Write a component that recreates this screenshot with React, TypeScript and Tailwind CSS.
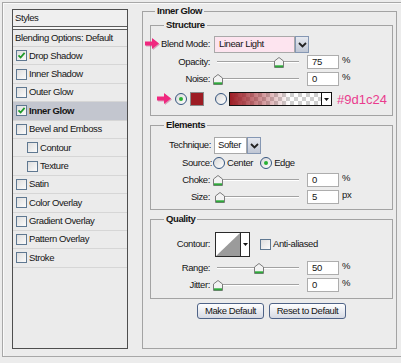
import React from "react";

const styleRows: { label: string; checked?: boolean; nested?: boolean; selected?: boolean }[] = [
  { label: "Drop Shadow", checked: true },
  { label: "Inner Shadow" },
  { label: "Outer Glow" },
  { label: "Inner Glow", checked: true, selected: true },
  { label: "Bevel and Emboss" },
  { label: "Contour", nested: true },
  { label: "Texture", nested: true },
  { label: "Satin" },
  { label: "Color Overlay" },
  { label: "Gradient Overlay" },
  { label: "Pattern Overlay" },
  { label: "Stroke" },
];

function CheckBox({ checked }: { checked?: boolean }) {
  return (
    <span className="w-[11px] h-[11px] border border-[#5f7891] bg-gradient-to-br from-[#dedede] to-[#fbfbfb] flex items-center justify-center shrink-0">
      {checked && (
        <svg width="9" height="9" viewBox="0 0 9 9">
          <path d="M1.5 4.3 L3.6 6.5 L7.6 1.8" stroke="#1f9a2a" strokeWidth="1.8" fill="none" />
        </svg>
      )}
    </span>
  );
}

function Radio({ on }: { on?: boolean }) {
  return (
    <span className="w-[12px] h-[12px] rounded-full border border-[#35557f] bg-gradient-to-br from-[#d8d8d8] to-white flex items-center justify-center shrink-0">
      {on && <span className="w-[4px] h-[4px] rounded-full bg-[#27b033]" />}
    </span>
  );
}

function PinkArrow() {
  return (
    <svg width="16" height="12" viewBox="0 0 16 12" className="shrink-0">
      <path d="M1 4.5 H8 V1 L15 6.5 L8 12 V8.5 H1 Z" fill="#b01a5c" opacity="0.35" />
      <path d="M0 3.5 H7 V0 L14 5.5 L7 11 V7.5 H0 Z" fill="#f0287f" />
    </svg>
  );
}

function Chevron() {
  return (
    <span className="w-[14px] h-full border border-[#8597b3] bg-gradient-to-b from-[#e6e9f0] to-[#bfc6d4] flex items-center justify-center shrink-0">
      <svg width="9" height="6" viewBox="0 0 9 6">
        <path d="M1 1 L4.5 4.5 L8 1" stroke="#222" strokeWidth="1.8" fill="none" />
      </svg>
    </span>
  );
}

function Slider({ value }: { value: number }) {
  // track 217..298, thumb centre at 218 for 0
  return (
    <div className="relative ml-[4px] w-[85px] h-full shrink-0">
      <div className="absolute left-[3px] right-0 top-[6px] h-[1px] bg-[#a2a2a2]" />
      <div className="absolute left-[3px] right-0 top-[7px] h-[1px] bg-white" />
      <svg
        className="absolute top-[2px]"
        style={{ left: Math.round(4 + value * 0.81) - 5 }}
        width="10"
        height="11"
        viewBox="0 0 10 11"
      >
        <path d="M0.5 4 L5 0.5 L9.5 4 V10.5 H0.5 Z" fill="#f3f3f3" stroke="#7b7b7b" />
        <path d="M1 9.3 H9" stroke="#2ea83a" strokeWidth="2" />
      </svg>
    </div>
  );
}

function NumBox({ value }: { value: string }) {
  return (
    <span className="ml-[8px] w-[32px] h-[14px] border border-[#adadad] bg-white pl-[4px] leading-[12px] shrink-0">
      {value}
    </span>
  );
}

function SliderRow({ label, value, pos, unit, top }: { label: string; value: string; pos: number; unit: string; top: string }) {
  return (
    <div className={`flex items-center h-[14px] ${top}`}>
      <span className="w-[59px] text-right shrink-0">{label}</span>
      <Slider value={pos} />
      <NumBox value={value} />
      <span className="ml-[3px] -mt-[3px]">{unit}</span>
    </div>
  );
}

export default function App() {
  return (
    <div className="w-[401px] h-[363px] bg-[#ececec] overflow-hidden font-['Liberation_Sans',Arial,sans-serif] text-[9.5px] tracking-[-0.4px] text-[#151515]">
      <div className="mt-[2px] ml-[2px] h-[355px] border-t border-l border-b border-[#a8a8a8] shadow-[inset_1px_1px_0_#fafafa] flex">
        {/* Styles list */}
        <div className="ml-[9px] mt-[6px] w-[116px] h-[340px] border border-[#4e4e4e] bg-[#ebebeb] flex flex-col">
          <div className="h-[16px] flex items-center pl-[2px] bg-[#efefef]">Styles</div>
          <div className="h-[4px] border-y border-[#5c5c5c] bg-[#f7f7f7]" />
          <div className="h-[17px] flex items-center pl-[2px] border-b border-[#d2d2d2]">Blending Options: Default</div>
          {styleRows.map((r) => (
            <div
              key={r.label}
              className={`h-[18.4px] flex items-center border-b border-[#d6d6d6] ${r.nested ? "pl-[14px]" : "pl-[3px]"} ${r.selected ? "bg-[#c3c6cf] font-bold" : ""}`}
            >
              <CheckBox checked={r.checked} />
              <span className="ml-[2px]">{r.label}</span>
            </div>
          ))}
        </div>

        {/* Inner Glow panel */}
        <fieldset className="ml-[14px] mt-[2px] w-[255px] h-[344px] border border-[#a3a3a3] pl-[7px] pr-[3px] pt-[2px]">
          <legend className="ml-[5px] px-[2px] font-bold leading-[12px]">Inner Glow</legend>

          {/* Structure */}
          <fieldset className="w-full h-[97px] border border-[#a3a3a3]">
            <legend className="ml-[13px] px-[2px] font-bold leading-[12px]">Structure</legend>
            <div className="relative flex items-center h-[17px] mt-[5px]">
              <span className="absolute -left-[6px] top-[2px]">
                <PinkArrow />
              </span>
              <span className="w-[59px] text-right shrink-0">Blend Mode:</span>
              <span className="ml-[4px] w-[81px] h-full border border-[#a9a9a9] bg-[#fde4ef] pl-[4px] flex items-center">Linear Light</span>
              <Chevron />
            </div>
            <SliderRow label="Opacity:" value="75" pos={75} unit="%" top="mt-[2px]" />
            <SliderRow label="Noise:" value="0" pos={0} unit="%" top="mt-[3px]" />
            <div className="flex items-center h-[14px] mt-[6px]">
              <span className="ml-[6px]">
                <PinkArrow />
              </span>
              <span className="ml-[2px]">
                <Radio on />
              </span>
              <span className="ml-[3px] w-[14px] h-[14px] border border-[#8a8a8a] bg-[#9d1c24]" />
              <span className="ml-[11px]">
                <Radio />
              </span>
              <span className="ml-[2px] w-[103px] h-[14px] border border-[#111] flex">
                <span className="flex-1 bg-[linear-gradient(to_right,#9d1c24,rgba(157,28,36,0.55)_30%,rgba(157,28,36,0)_65%),repeating-conic-gradient(#cfcfcf_0_25%,#ffffff_0_50%)] [background-size:100%_100%,8px_8px]" />
                <span className="w-[10px] border-l border-[#111] bg-white flex items-center justify-center">
                  <svg width="5" height="3" viewBox="0 0 5 3">
                    <path d="M0 0 H5 L2.5 3 Z" fill="#111" />
                  </svg>
                </span>
              </span>
              <span className="ml-[5px] text-[13px] tracking-[0px] text-[#ea3b8d] leading-none">#9d1c24</span>
            </div>
          </fieldset>

          {/* Elements */}
          <fieldset className="w-full h-[91px] mt-[3px] border border-[#a3a3a3]">
            <legend className="ml-[13px] px-[2px] font-bold leading-[12px]">Elements</legend>
            <div className="flex items-center h-[17px] mt-[6px]">
              <span className="w-[60px] text-right shrink-0">Technique:</span>
              <span className="ml-[3px] w-[33px] h-full border border-[#a9a9a9] bg-white pl-[3px] flex items-center">Softer</span>
              <Chevron />
            </div>
            <div className="flex items-center h-[12px] mt-[3px]">
              <span className="w-[61px] text-right shrink-0">Source:</span>
              <span className="ml-[1px]">
                <Radio />
              </span>
              <span className="ml-[2px]">Center</span>
              <span className="ml-[7px]">
                <Radio on />
              </span>
              <span className="ml-[2px]">Edge</span>
            </div>
            <SliderRow label="Choke:" value="0" pos={0} unit="%" top="mt-[4px]" />
            <SliderRow label="Size:" value="5" pos={2} unit="px" top="mt-[3px]" />
          </fieldset>

          {/* Quality */}
          <fieldset className="w-full h-[86px] mt-[3px] border border-[#a3a3a3]">
            <legend className="ml-[13px] px-[2px] font-bold leading-[12px]">Quality</legend>
            <div className="flex items-center h-[25px] mt-[7px]">
              <span className="w-[59px] text-right shrink-0">Contour:</span>
              <span className="ml-[5px] w-[35px] h-[25px] border border-[#2a2a2a] bg-white flex">
                <svg width="24" height="23" viewBox="0 0 24 23" className="shrink-0">
                  <path d="M0 23 L24 0 V23 Z" fill="#9b9b9b" />
                </svg>
                <span className="flex-1 border-l border-[#2a2a2a] flex items-center justify-center">
                  <svg width="5" height="3" viewBox="0 0 5 3">
                    <path d="M0 0 H5 L2.5 3 Z" fill="#111" />
                  </svg>
                </span>
              </span>
              <span className="ml-[10px]">
                <CheckBox />
              </span>
              <span className="ml-[2px]">Anti-aliased</span>
            </div>
            <SliderRow label="Range:" value="50" pos={50} unit="%" top="mt-[4px]" />
            <SliderRow label="Jitter:" value="0" pos={0} unit="%" top="mt-[3px]" />
          </fieldset>

          {/* Buttons */}
          <div className="flex gap-[5px] mt-[4px] ml-[47px]">
            <button className="w-[67px] h-[16px] rounded-[3px] border border-[#4f6387] bg-gradient-to-b from-white to-[#d6dae4] leading-[14px]">
              Make Default
            </button>
            <button className="w-[77px] h-[16px] rounded-[3px] border border-[#4f6387] bg-gradient-to-b from-white to-[#d6dae4] leading-[14px]">
              Reset to Default
            </button>
          </div>
        </fieldset>
      </div>
    </div>
  );
}
